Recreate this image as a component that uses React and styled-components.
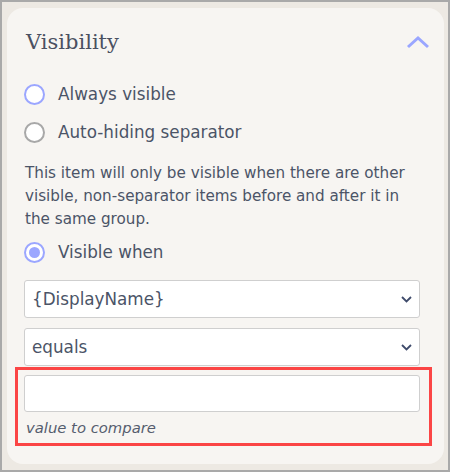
import React from "react";
import styled, { createGlobalStyle } from "styled-components";

const GlobalStyle = createGlobalStyle`
	html, body {
		margin: 0;
		padding: 0;
		background: #ede9e3;
	}
	* {
		box-sizing: border-box;
	}
`;

const Frame = styled.div`
	width: 450px;
	height: 472px;
	border: 2px solid #a9a9a9;
	background: #ede9e3;
	padding: 6px 4px 6px 5px;
	font-family: "DejaVu Sans", "Noto Sans", sans-serif;
	color: #4b5467;
`;

const Card = styled.div`
	background: #f7f5f2;
	border-radius: 16px;
	height: 100%;
	padding: 18px 24px 0 17px;
	display: flex;
	flex-direction: column;
`;

const Header = styled.div`
	display: flex;
	justify-content: space-between;
	align-items: center;
	margin-right: -16px;
	height: 32px;
	margin-bottom: 24px;
`;

const Title = styled.h2`
	margin: 0 0 0 2px;
	font-family: "DejaVu Serif", "Liberation Serif", serif;
	font-weight: normal;
	font-size: 21px;
	color: #4a5061;
`;

const Chevron = styled.svg`
	width: 24px;
	height: 14px;
	margin-right: 6px;
`;

const RadioRow = styled.label`
	display: flex;
	align-items: center;
	gap: 13px;
	height: 24px;
	margin-bottom: ${(p) => p.$gap || 14}px;
	font-size: 16.8px;
	cursor: pointer;
`;

const Circle = styled.span`
	width: 21px;
	height: 21px;
	border-radius: 50%;
	border: 2px solid ${(p) => (p.$active ? "#9ba6ff" : "#a8a8a8")};
	background: #fff;
	display: flex;
	align-items: center;
	justify-content: center;
	flex-shrink: 0;

	&::after {
		content: "";
		width: 11px;
		height: 11px;
		border-radius: 50%;
		background: ${(p) => (p.$checked ? "#9ba6ff" : "transparent")};
	}
`;

const Help = styled.p`
	margin: 4px 0 9px 1px;
	font-size: 15.2px;
	line-height: 23px;
`;

const Select = styled.div`
	height: 38px;
	background: #fff;
	border: 1px solid #cfcfcf;
	border-radius: 3px;
	display: flex;
	align-items: center;
	justify-content: space-between;
	padding: 0 7px 0 7px;
	margin-bottom: 10px;
	font-size: 16.8px;
	color: #4b5467;
`;

const Caret = styled.svg`
	width: 11px;
	height: 7px;
`;

const Highlight = styled.div`
	border: 3px solid #fb4545;
	margin: -9px -12px 0 -9px;
	padding: 5px 9px 7px 6px;
`;

const Input = styled.input`
	display: block;
	width: 100%;
	height: 37px;
	border: 1px solid #cfcfcf;
	border-radius: 3px;
	background: #fff;
	font: inherit;
	outline: none;
`;

const Hint = styled.div`
	font-style: italic;
	font-size: 14.8px;
	margin: 7px 0 0 2px;
	color: #555d6e;
`;

function Radio({ label, active, checked, gap }) {
	return (
		<RadioRow $gap={gap}>
			<Circle $active={active} $checked={checked} />
			{label}
		</RadioRow>
	);
}

function Dropdown({ value }) {
	return (
		<Select>
			{value}
			<Caret viewBox="0 0 11 7">
				<path d="M1 1 L5.5 5.5 L10 1" fill="none" stroke="#3f4b6b" strokeWidth="1.8" />
			</Caret>
		</Select>
	);
}

export default function App() {
	return (
		<>
			<GlobalStyle />
			<Frame>
				<Card>
					<Header>
						<Title>Visibility</Title>
						<Chevron viewBox="0 0 24 14">
							<path d="M2 12 L12 3 L22 12" fill="none" stroke="#9aa6ff" strokeWidth="3" />
						</Chevron>
					</Header>
					<Radio label="Always visible" active />
					<Radio label="Auto-hiding separator" gap={14} />
					<Help>
						This item will only be visible when there are other visible, non-separator items before and after it in
						the same group.
					</Help>
					<Radio label="Visible when" active checked gap={16} />
					<Dropdown value="{DisplayName}" />
					<Dropdown value="equals" />
					<Highlight>
						<Input type="text" />
						<Hint>value to compare</Hint>
					</Highlight>
				</Card>
			</Frame>
		</>
	);
}
